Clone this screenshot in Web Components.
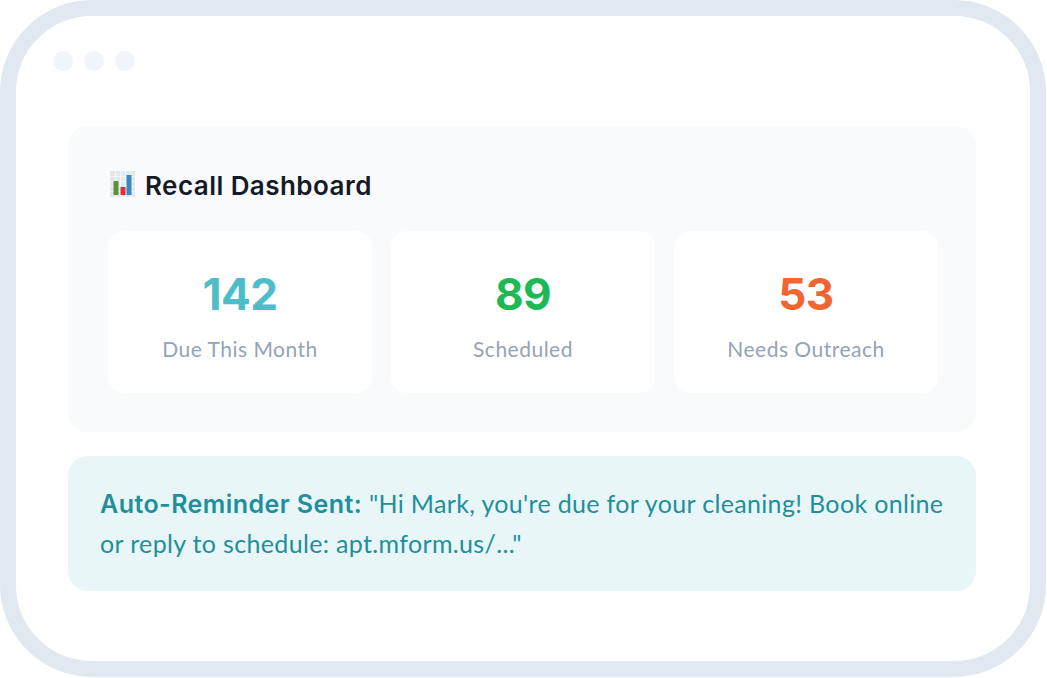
<!DOCTYPE html>
<html><head><meta charset="utf-8"><style>
html,body{margin:0;padding:0;background:#fff}
body{width:1047px;height:678px;overflow:hidden;font-family:"Inter","Noto Sans",sans-serif}
</style></head><body>
<recall-frame>
  <recall-panel heading="Recall Dashboard">
    <stat-card value="142" color="#4dbdc9">Due This Month</stat-card>
    <stat-card value="89" color="#1db954">Scheduled</stat-card>
    <stat-card value="53" color="#f26430">Needs Outreach</stat-card>
  </recall-panel>
  <reminder-note><b>Auto-Reminder Sent:</b> <span>"Hi Mark, you're due for your cleaning! Book online</span><br><span>or reply to schedule: apt.mform.us/..."</span></reminder-note>
</recall-frame>
<script>
function def(name,html,init){customElements.define(name,class extends HTMLElement{constructor(){super();const r=this.attachShadow({mode:'open'});r.innerHTML=html;}connectedCallback(){if(init)init(this,this.shadowRoot);}});}
def('recall-frame',`<style>
:host{display:block;box-sizing:border-box;width:1046px;height:677px;border:16px solid #e2e8f0;border-radius:92px;background:#fff;padding:35px 54px 0 52px}
.dots{display:flex;gap:11px;height:20px;margin-left:-15px;margin-bottom:55px}
.dots i{width:20px;height:20px;border-radius:50%;background:#f1f5f9}
.body{display:flex;flex-direction:column;gap:24px}
</style><div class="dots"><i></i><i></i><i></i></div><div class="body"><slot></slot></div>`);
def('recall-panel',`<style>
:host{display:block;box-sizing:border-box;height:306px;padding:40px 38px 40px 40px;background:#f8fafc;border-radius:20px}
h3{margin:0 0 26px;height:39px;box-sizing:border-box;padding:0 0 0 2px;display:flex;align-items:center;gap:10px;font:600 26px/36px "Inter",sans-serif;letter-spacing:.45px;color:#141a26}
svg{flex:none;margin-bottom:3px}
.g{display:grid;grid-template-columns:repeat(3,264px);gap:19px}
</style><h3><svg width="25" height="26" viewBox="0 0 25 26"><rect width="25" height="26" fill="#e3e8ec"/><path d="M0 5.5h25M0 10.5h25M0 15.5h25M0 20.5h25M5.5 0v26M10.5 0v26M15.5 0v26M20.5 0v26" stroke="#f4f6f8" stroke-width="1"/><rect x="3.5" y="10" width="5" height="14" fill="#5c913b"/><rect x="10.5" y="16" width="5" height="8" fill="#dd2e44"/><rect x="16.5" y="4" width="5" height="20" fill="#3b88c3"/></svg><span id="t"></span></h3><div class="g"><slot></slot></div>`,(h,r)=>{r.getElementById('t').textContent=h.getAttribute('heading')||'';});
def('stat-card',`<style>
:host{display:flex;flex-direction:column;align-items:center;box-sizing:border-box;height:162px;background:#fff;border-radius:16px;padding-top:35px}
.v{font:700 44px/56px "Inter",sans-serif;letter-spacing:-.5px}
.l{font:400 21px/28px "Lato",sans-serif;color:#94a3b8;margin-top:13px;letter-spacing:.5px}
</style><div class="v" id="v"></div><div class="l"><slot></slot></div>`,(h,r)=>{const v=r.getElementById('v');v.textContent=h.getAttribute('value')||'';v.style.color=h.getAttribute('color')||'';});
def('reminder-note',`<style>
:host{display:block;box-sizing:border-box;height:135px;padding:28px 24px 28px 32px;background:#e8f6f8;border-radius:20px;color:#1f8f9b;font:400 25px/39px "Lato",sans-serif;letter-spacing:.34px;white-space:nowrap}
::slotted(b){font:600 25px/39px "Inter",sans-serif;letter-spacing:.44px}
</style><slot></slot>`);
</script>
</body></html>
